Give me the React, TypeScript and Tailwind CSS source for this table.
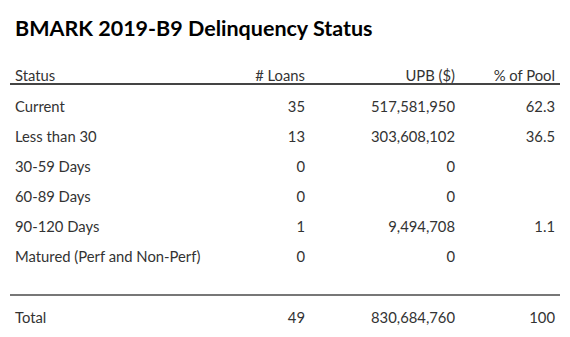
const rows = [
  { status: "Current", loans: "35", upb: "517,581,950", pct: "62.3" },
  { status: "Less than 30", loans: "13", upb: "303,608,102", pct: "36.5" },
  { status: "30-59 Days", loans: "0", upb: "0", pct: "" },
  { status: "60-89 Days", loans: "0", upb: "0", pct: "" },
  { status: "90-120 Days", loans: "1", upb: "9,494,708", pct: "1.1" },
  { status: "Matured (Perf and Non-Perf)", loans: "0", upb: "0", pct: "" },
];

const cols = "grid grid-cols-[200px_100px_150px_100px]";

export default function App() {
  return (
    <div className="w-[570px] h-[337px] bg-white px-[10px] text-[#333] font-['Lato',sans-serif] overflow-hidden">
      <h1 className="pt-[14px] pl-[5px] h-[60px] text-[21.5px] font-bold text-black leading-[28px]">
        BMARK 2019-B9 Delinquency Status
      </h1>

      {/* entête */}
      <div className={`${cols} h-[25px] pt-[6px] border-b-2 border-[#444] text-[14.8px] leading-[18px]`}>
        <div className="px-[5px]">Status</div>
        <div className="px-[5px] text-right"># Loans</div>
        <div className="px-[5px] text-right">UPB ($)</div>
        <div className="px-[5px] text-right">% of Pool</div>
      </div>

      <div className="pt-[6px] pb-[23px] border-b-2 border-[#777]">
        {rows.map(r => (
          <div key={r.status} className={`${cols} h-[30px] items-center text-[14.8px]`}>
            <div className="px-[5px]">{r.status}</div>
            <div className="px-[5px] text-right">{r.loans}</div>
            <div className="px-[5px] text-right">{r.upb}</div>
            <div className="px-[5px] text-right">{r.pct}</div>
          </div>
        ))}
      </div>

      <div className={`${cols} h-[42px] items-center text-[14.8px]`}>
        <div className="px-[5px]">Total</div>
        <div className="px-[5px] text-right">49</div>
        <div className="px-[5px] text-right">830,684,760</div>
        <div className="px-[5px] text-right">100</div>
      </div>
    </div>
  );
}
